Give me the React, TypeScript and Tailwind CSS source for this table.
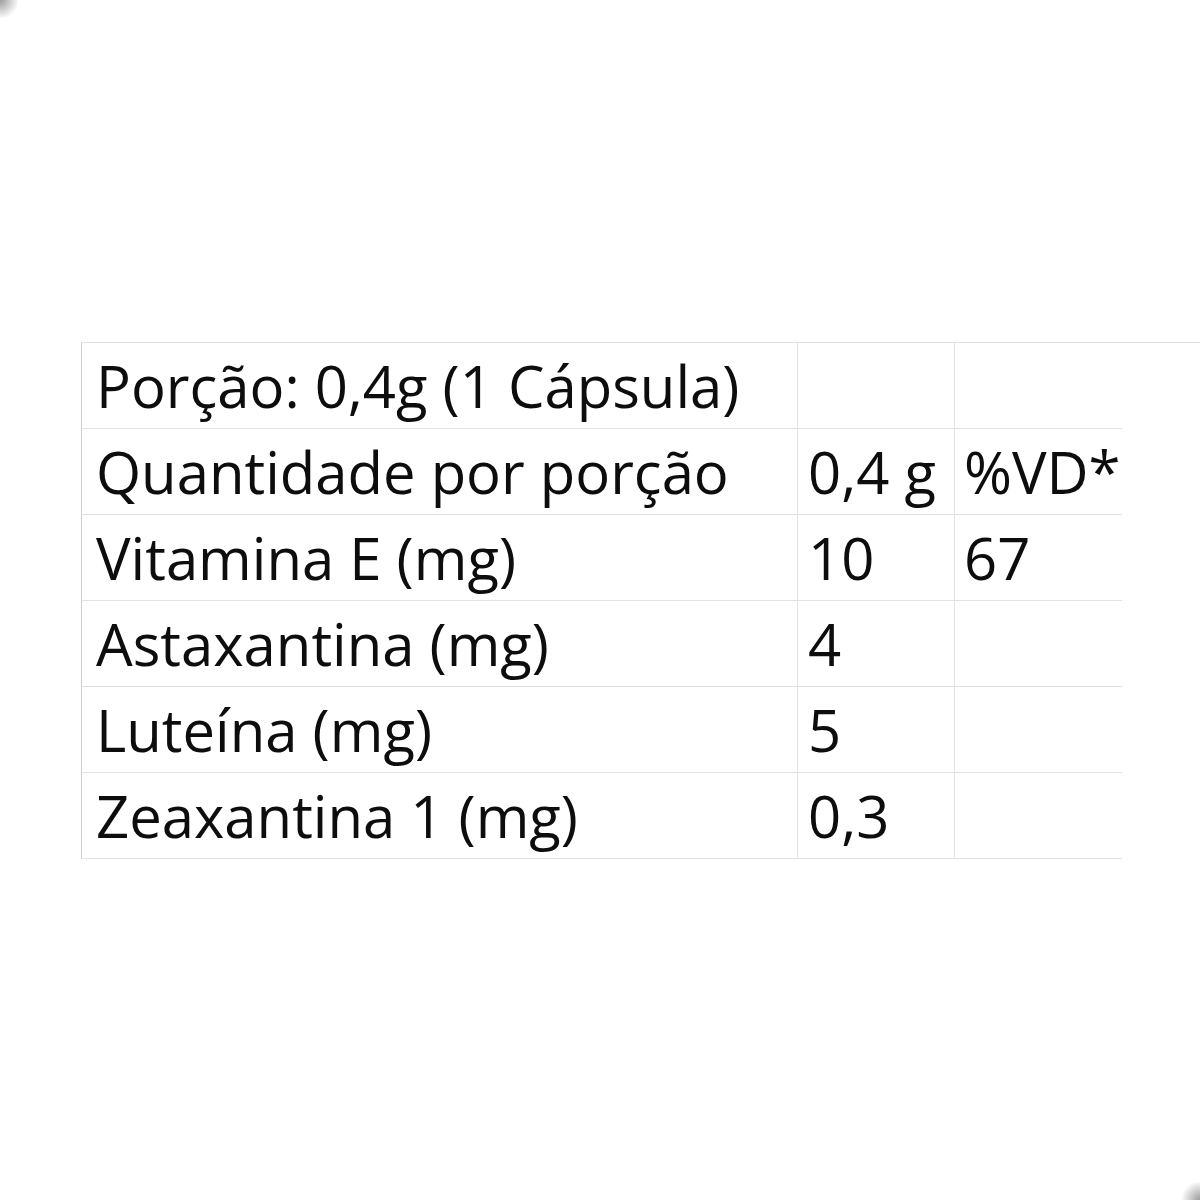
import React from 'react';

const rows: [string, string, string][] = [
  ['Porção: 0,4g (1 Cápsula)', '', ''],
  ['Quantidade por porção', '0,4 g', '%VD*'],
  ['Vitamina E (mg)', '10', '67'],
  ['Astaxantina (mg)', '4', ''],
  ['Luteína (mg)', '5', ''],
  ['Zeaxantina 1 (mg)', '0,3', ''],
];

const App: React.FC = () => {
  return (
    <div className="relative w-[1200px] h-[1200px] bg-white overflow-hidden" style={{ fontFamily: '"Open Sans", Lato, sans-serif' }}>
      {/* corner shading */}
      <div className="absolute left-0 top-0 w-[18px] h-[18px] bg-[radial-gradient(circle_at_0_0,#9a9a9a_0%,#ffffff_75%)]"></div>
      <div className="absolute right-0 bottom-0 w-[18px] h-[18px] bg-[radial-gradient(circle_at_100%_100%,#9a9a9a_0%,#ffffff_75%)]"></div>

      <div className="pt-[342px] pl-[81px]">
        <div className="grid grid-cols-[717px_157px_167px] border-t border-[#e2e2e2] text-[58px] text-[#0d0d0d] leading-none [font-variant-ligatures:none]">
          {rows.map((row, r) => (
            <React.Fragment key={r}>
              <div className="h-[86px] flex items-end pl-[14px] pb-[13px] border-b border-r border-l border-[#e2e2e2] border-l-[#cfcfcf] whitespace-nowrap">
                {row[0]}
              </div>
              <div className="h-[86px] flex items-end pl-[10px] pb-[13px] border-b border-r border-[#e2e2e2] whitespace-nowrap">
                {row[1]}
              </div>
              <div className="h-[86px] flex items-end pl-[9px] pb-[13px] border-b border-[#e2e2e2] whitespace-nowrap">
                {row[2]}
              </div>
            </React.Fragment>
          ))}
        </div>
      </div>
    </div>
  );
};

export default App;
